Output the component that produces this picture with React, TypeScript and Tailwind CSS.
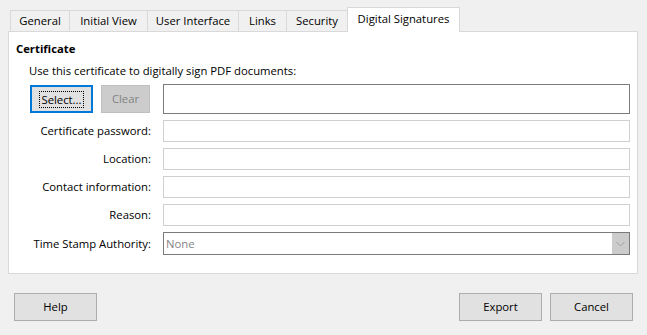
import React from "react";

const font = { fontFamily: '"Open Sans", "Noto Sans", sans-serif' };

function Tab({ label, active, w }: { label: string; active?: boolean; w: string }) {
  if (active) {
    return (
      <div
        className={`relative z-10 -ml-px mb-[-1px] flex h-[25px] items-center justify-center border border-b-0 border-[#d9d9d9] bg-white pb-[2px] ${w}`}
      >
        {label}
      </div>
    );
  }
  return (
    <div
      className={`-ml-px flex h-[21px] items-center justify-center border border-b-0 border-[#d9d9d9] bg-[#f0f0f0] first:ml-0 ${w}`}
    >
      {label}
    </div>
  );
}

function Row({ label, children, mt }: { label: string; children: React.ReactNode; mt: string }) {
  return (
    <div className={`flex items-center ${mt}`}>
      <div className="w-[142px] text-right">{label}</div>
      <div className="ml-[12px]">{children}</div>
    </div>
  );
}

function Field() {
  return <div className="h-[22px] w-[467px] border border-[#d0d0d0] bg-white" />;
}

function Btn({ label, w }: { label: string; w: string }) {
  return (
    <div
      className={`flex h-[28px] items-center justify-center border border-[#adadad] bg-[#e1e1e1] ${w}`}
    >
      {label}
    </div>
  );
}

export default function App() {
  return (
    <div
      className="h-[335px] w-[647px] overflow-hidden bg-[#f0f0f0] text-[11.3px] leading-[16px] text-black"
      style={font}
    >
      <div className="flex h-[31px] items-end pl-[10px] pt-[8px]">
        <Tab label="General" w="w-[60px]" />
        <Tab label="Initial View" w="w-[79px]" />
        <Tab label="User Interface" w="w-[92px]" />
        <Tab label="Links" w="w-[49px]" />
        <Tab label="Security" w="w-[62px]" />
        <Tab label="Digital Signatures" w="w-[113px]" active />
      </div>
      <div className="ml-[8px] h-[243px] w-[630px] border border-[#d9d9d9] bg-white pt-[9px]">
        <div className="pl-[7px] font-bold">Certificate</div>
        <div className="mt-[6px] pl-[20px]">Use this certificate to digitally sign PDF documents:</div>
        <div className="mt-[5px] flex items-center pl-[21px]">
          <div className="flex h-[28px] w-[63px] items-center justify-center border-2 border-[#0078d7] bg-[#e1e1e1]">
            <span className="border border-dotted border-black px-[1px] leading-[15px]">Select...</span>
          </div>
          <div className="ml-[8px] flex h-[28px] w-[49px] items-center justify-center border border-[#bfbfbf] bg-[#cccccc] text-[#838383]">
            Clear
          </div>
          <div className="ml-[13px] h-[30px] w-[467px] border border-[#7a7a7a] bg-white" />
        </div>
        <Row label="Certificate password:" mt="mt-[6px]">
          <Field />
        </Row>
        <Row label="Location:" mt="mt-[6px]">
          <Field />
        </Row>
        <Row label="Contact information:" mt="mt-[6px]">
          <Field />
        </Row>
        <Row label="Reason:" mt="mt-[6px]">
          <Field />
        </Row>
        <Row label="Time Stamp Authority:" mt="mt-[6px]">
          <div className="flex h-[23px] w-[467px] items-stretch border border-[#7a7a7a] bg-white">
            <div className="flex flex-1 items-center pl-[2px] text-[#838383]">None</div>
            <div className="flex w-[17px] items-center justify-center bg-[#cccccc]">
              <svg width="9" height="6" viewBox="0 0 9 6">
                <path d="M0.5 1 L4.5 5 L8.5 1" fill="none" stroke="#a0a0a0" strokeWidth="1" />
              </svg>
            </div>
          </div>
        </Row>
      </div>
      <div className="mt-[19px] flex items-center pl-[14px]">
        <Btn label="Help" w="w-[83px]" />
        <div className="flex-1" />
        <Btn label="Export" w="w-[83px]" />
        <div className="w-[8px]" />
        <Btn label="Cancel" w="w-[83px]" />
        <div className="w-[14px]" />
      </div>
    </div>
  );
}
